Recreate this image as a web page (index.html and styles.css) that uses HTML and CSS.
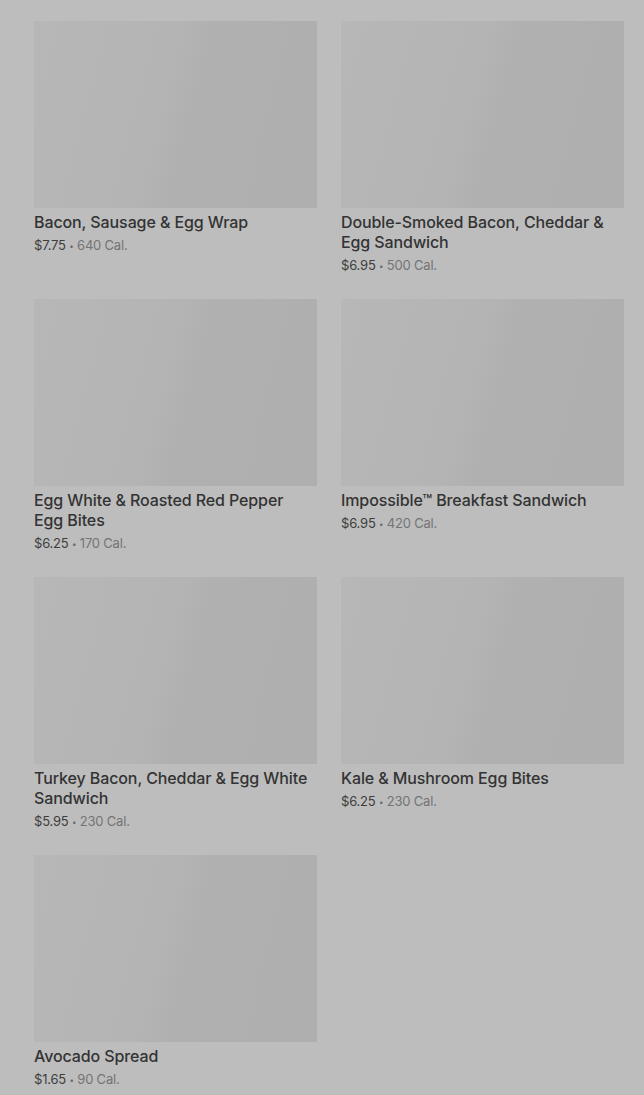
FILE: index.html
```html
<!DOCTYPE html>
<html>
<head>
<meta charset="utf-8">
<link rel="stylesheet" href="styles.css">
</head>
<body>
<main class="grid">
  <div class="card"><div class="img"></div><div class="title">Bacon, Sausage &amp; Egg Wrap</div><div class="meta"><span class="price">$7.75</span> <span class="dot">•</span> <span class="cal">640 Cal.</span></div></div>
  <div class="card"><div class="img"></div><div class="title">Double-Smoked Bacon, Cheddar &amp; Egg Sandwich</div><div class="meta"><span class="price">$6.95</span> <span class="dot">•</span> <span class="cal">500 Cal.</span></div></div>
  <div class="card"><div class="img"></div><div class="title">Egg White &amp; Roasted Red Pepper Egg Bites</div><div class="meta"><span class="price">$6.25</span> <span class="dot">•</span> <span class="cal">170 Cal.</span></div></div>
  <div class="card"><div class="img"></div><div class="title">Impossible™ Breakfast Sandwich</div><div class="meta"><span class="price">$6.95</span> <span class="dot">•</span> <span class="cal">420 Cal.</span></div></div>
  <div class="card"><div class="img"></div><div class="title">Turkey Bacon, Cheddar &amp; Egg White Sandwich</div><div class="meta"><span class="price">$5.95</span> <span class="dot">•</span> <span class="cal">230 Cal.</span></div></div>
  <div class="card"><div class="img"></div><div class="title">Kale &amp; Mushroom Egg Bites</div><div class="meta"><span class="price">$6.25</span> <span class="dot">•</span> <span class="cal">230 Cal.</span></div></div>
  <div class="card"><div class="img"></div><div class="title">Avocado Spread</div><div class="meta"><span class="price">$1.65</span> <span class="dot">•</span> <span class="cal">90 Cal.</span></div></div>
</main>
</body>
</html>
```

FILE: styles.css
```css
html, body {
  margin: 0;
  padding: 0;
  background: #bdbdbd;
  font-family: Inter, "Noto Sans", sans-serif;
}
.grid {
  display: grid;
  grid-template-columns: 283px 283px;
  column-gap: 24px;
  row-gap: 24px;
  padding: 21px 20px 0 34px;
  align-items: start;
}
.card {
  display: flex;
  flex-direction: column;
}
.img {
  height: 187px;
  background: linear-gradient(105deg, #b7b7b7 0%, #b4b4b4 45%, #b0b0b0 55%, #afafaf 100%);
  margin-bottom: 4px;
}
.title {
  font-size: 16px;
  line-height: 20px;
  font-weight: 500;
  color: #333333;
  letter-spacing: -0.1px;
  padding-right: 6px;
}
.meta {
  height: 20px;
  font-size: 13px;
  line-height: 20px;
  margin-top: 3px;
  color: #3d3d3d;
  letter-spacing: -0.2px;
  overflow: hidden;
}
.dot {
  display: inline-block;
  font-size: 8px;
  line-height: 8px;
  color: #6a6a6a;
  transform: translateY(-1px);
}
.cal {
  color: #747474;
}
```
